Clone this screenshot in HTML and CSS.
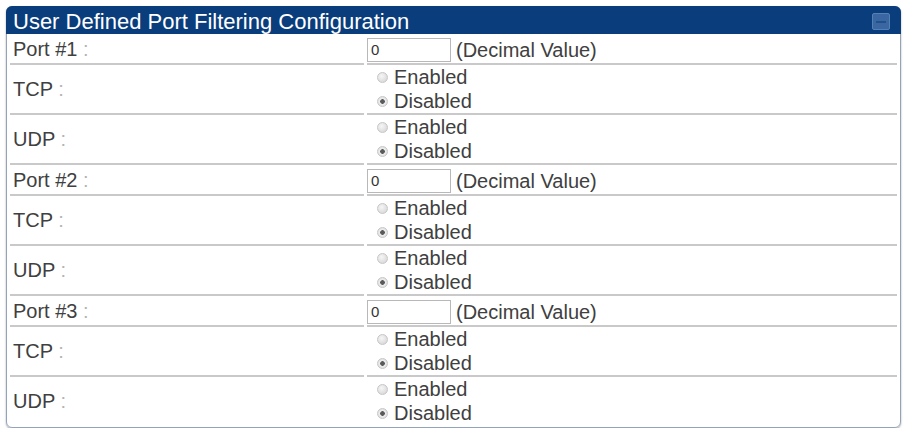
FILE: index.html
```html
<!DOCTYPE html>
<html lang="en">
<head>
    <meta charset="UTF-8">
    <meta name="viewport" content="width=device-width, initial-scale=1.0">
    <title>User Defined Port Filtering Configuration</title>
    <link rel="stylesheet" href="styles.css">
</head>
<body>
    <div class="panel">
        <div class="panel-head">
            <span class="panel-title">User Defined Port Filtering Configuration</span>
            <span class="collapse" title="Collapse"></span>
        </div>
        <table class="cfg">
            <!-- port 1 -->
            <tr class="port-row">
                <td class="label">Port #1 <span class="colon">:</span></td>
                <td class="value"><input class="num" type="text" value="0"><span class="hint">(Decimal Value)</span></td>
            </tr>
            <tr class="opt-row">
                <td class="label">TCP <span class="colon">:</span></td>
                <td class="value">
                    <label class="opt"><input type="radio" name="tcp1">Enabled</label>
                    <label class="opt"><input type="radio" name="tcp1" checked>Disabled</label>
                </td>
            </tr>
            <tr class="opt-row">
                <td class="label">UDP <span class="colon">:</span></td>
                <td class="value">
                    <label class="opt"><input type="radio" name="udp1">Enabled</label>
                    <label class="opt"><input type="radio" name="udp1" checked>Disabled</label>
                </td>
            </tr>
            <!-- port 2 -->
            <tr class="port-row">
                <td class="label">Port #2 <span class="colon">:</span></td>
                <td class="value"><input class="num" type="text" value="0"><span class="hint">(Decimal Value)</span></td>
            </tr>
            <tr class="opt-row">
                <td class="label">TCP <span class="colon">:</span></td>
                <td class="value">
                    <label class="opt"><input type="radio" name="tcp2">Enabled</label>
                    <label class="opt"><input type="radio" name="tcp2" checked>Disabled</label>
                </td>
            </tr>
            <tr class="opt-row">
                <td class="label">UDP <span class="colon">:</span></td>
                <td class="value">
                    <label class="opt"><input type="radio" name="udp2">Enabled</label>
                    <label class="opt"><input type="radio" name="udp2" checked>Disabled</label>
                </td>
            </tr>
            <!-- port 3 -->
            <tr class="port-row">
                <td class="label">Port #3 <span class="colon">:</span></td>
                <td class="value"><input class="num" type="text" value="0"><span class="hint">(Decimal Value)</span></td>
            </tr>
            <tr class="opt-row">
                <td class="label">TCP <span class="colon">:</span></td>
                <td class="value">
                    <label class="opt"><input type="radio" name="tcp3">Enabled</label>
                    <label class="opt"><input type="radio" name="tcp3" checked>Disabled</label>
                </td>
            </tr>
            <tr class="opt-row">
                <td class="label">UDP <span class="colon">:</span></td>
                <td class="value">
                    <label class="opt"><input type="radio" name="udp3">Enabled</label>
                    <label class="opt"><input type="radio" name="udp3" checked>Disabled</label>
                </td>
            </tr>
        </table>
    </div>
</body>
</html>
```

FILE: styles.css
```css
body {
    margin: 0;
    background: #ffffff;
    font-family: "Liberation Sans", Arial, sans-serif;
    color: #404040;
}

.panel {
    margin: 6px 6px 0 6px;
    border: 1px solid #93a3b8;
    border-radius: 6px;
    box-shadow: 0 1px 2px rgba(0, 0, 0, 0.35);
    padding-bottom: 2px;
}

.panel-head {
    display: flex;
    align-items: flex-start;
    justify-content: space-between;
    margin: -1px -1px 0 -1px;
    height: 28px;
    padding: 3px 11px 0 7px;
    box-sizing: border-box;
    background: #0a3d7b;
    border-radius: 6px 6px 0 0;
}

.panel-title {
    color: #ffffff;
    font-size: 22px;
    line-height: 25px;
}

/* collapse button in the title bar */
.collapse {
    position: relative;
    width: 18px;
    height: 17px;
    margin-top: 4px;
    box-sizing: border-box;
    background: #3a67a1;
    border: 1px solid #5580b4;
    border-radius: 2px;
}

.collapse::after {
    content: "";
    position: absolute;
    left: 3px;
    right: 3px;
    top: 7px;
    height: 2px;
    background: #22508b;
}

.cfg {
    width: 100%;
    border-collapse: separate;
    border-spacing: 3px 0;
}

.cfg td {
    border-bottom: 2px solid #c9c9c9;
    padding: 0;
    font-size: 20px;
    line-height: 24px;
}

.cfg tr:last-child td {
    border-bottom: none;
}

.cfg .label {
    width: 351px;
    padding-left: 3px;
    vertical-align: middle;
}

.colon {
    color: #b3b3b3;
}

.port-row td {
    height: 31px;
    padding-top: 1px;
    box-sizing: border-box;
}

.opt-row td {
    height: 48px;
}

.num {
    width: 84px;
    height: 24px;
    box-sizing: border-box;
    margin: 0 5px 0 0;
    padding: 0 3px;
    border: 1px solid #b8b8b8;
    font-family: "Liberation Sans", Arial, sans-serif;
    font-size: 15px;
    color: #333333;
    vertical-align: middle;
}

.hint {
    vertical-align: middle;
}

.opt {
    display: block;
}

.opt input {
    appearance: none;
    -webkit-appearance: none;
    width: 11px;
    height: 11px;
    margin: 0 6px 0 10px;
    border: 1px solid #c6c6c6;
    border-radius: 50%;
    background: radial-gradient(circle at 40% 35%, #f6f6f6, #d2d2d2);
    vertical-align: 1px;
}

.opt input:checked {
    background: radial-gradient(circle, #5a5a5a 0 2px, #eeeeee 2.6px, #d6d6d6);
}
```
